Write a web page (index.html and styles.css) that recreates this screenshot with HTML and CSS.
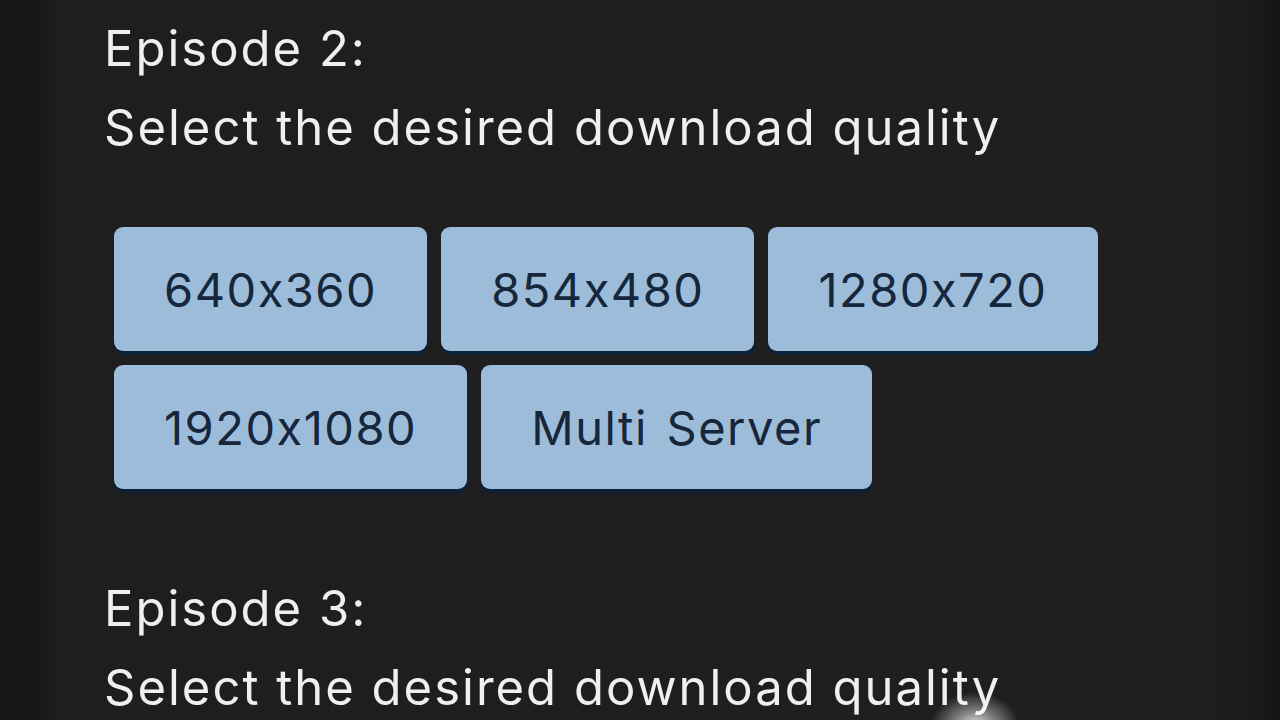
FILE: index.html
```html
<!DOCTYPE html>
<html lang="en">
<head>
<meta charset="utf-8">
<title>Episodes</title>
<link rel="stylesheet" href="styles.css">
</head>
<body>
<main class="page">
  <section class="episode">
    <p class="line">Episode 2:</p>
    <p class="line">Select the desired download quality</p>
    <div class="qualities">
      <a class="btn" href="#">640x360</a>
      <a class="btn" href="#">854x480</a>
      <a class="btn" href="#">1280x720</a>
      <a class="btn" href="#">1920x1080</a>
      <a class="btn" href="#">Multi Server</a>
    </div>
  </section>
  <section class="episode episode-next">
    <p class="line">Episode 3:</p>
    <p class="line">Select the desired download quality</p>
  </section>
  <div class="touch"></div>
</main>
</body>
</html>
```
FILE: styles.css
```css
html, body {
  margin: 0;
  padding: 0;
  height: 100%;
  overflow: hidden;
}
body {
  background: linear-gradient(to right, #161616 0px, #181818 40px, #1e1e1f 60px, #1f1f20 1200px, #1b1b1b 1245px, #151515 1280px);
  font-family: Inter, "Open Sans", sans-serif;
  font-feature-settings: "calt" 0;
}
.page {
  position: relative;
  height: 720px;
  padding: 9px 0 0 104px;
  box-sizing: border-box;
}
.line {
  margin: 0;
  color: #efefef;
  font-size: 49px;
  line-height: 79px;
  letter-spacing: 2px;
  font-weight: 400;
}
.qualities {
  display: flex;
  flex-wrap: wrap;
  gap: 14px 14px;
  margin: 60px 0 0 10px;
  width: 1000px;
}
.btn {
  display: flex;
  align-items: center;
  justify-content: center;
  height: 124px;
  padding: 0 50px;
  box-sizing: border-box;
  background: #9dbcda;
  border-radius: 9px;
  box-shadow: 0 4px 0 #0c2038;
  color: #16263b;
  font-size: 47px;
  letter-spacing: 1.5px;
  word-spacing: 4px;
  text-decoration: none;
  font-feature-settings: "calt" 0;
}
.episode-next {
  margin-top: 80px;
}
.touch {
  position: absolute;
  left: 930px;
  top: 692px;
  width: 90px;
  height: 70px;
  border-radius: 50%;
  background: radial-gradient(ellipse at center, rgba(255,255,255,0.9) 0%, rgba(255,255,255,0.4) 35%, rgba(255,255,255,0) 70%);
}
```
